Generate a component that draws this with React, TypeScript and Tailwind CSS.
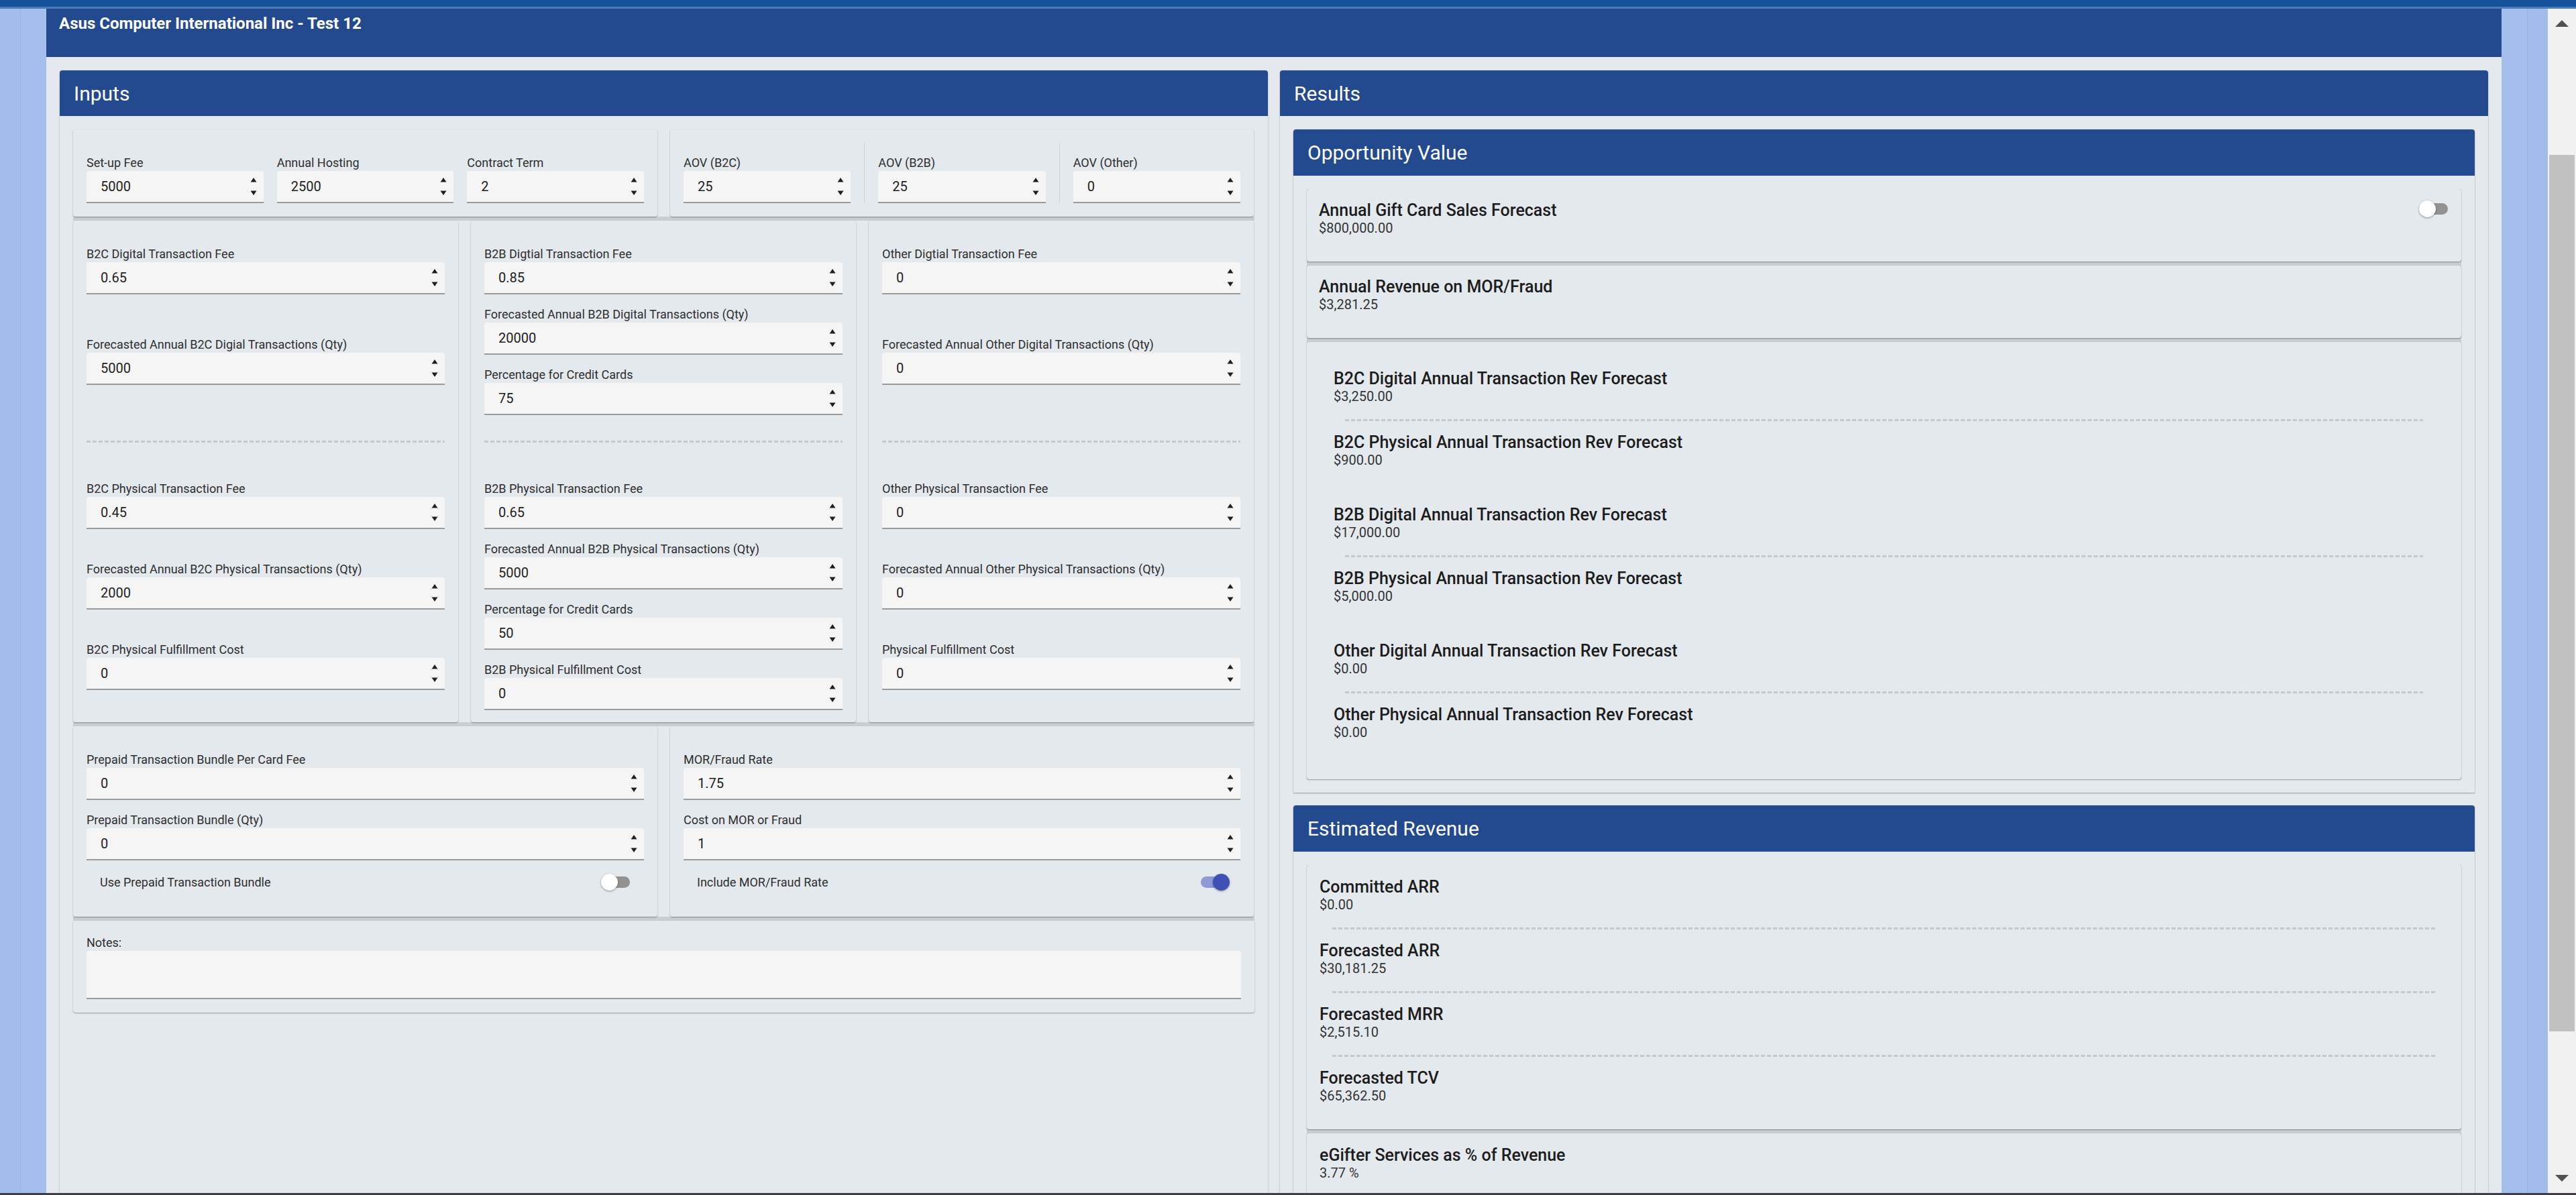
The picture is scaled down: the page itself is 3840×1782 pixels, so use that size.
import React from "react";

/* -------------------------------------------------------------------------- */
/* Small pieces                                                                */
/* -------------------------------------------------------------------------- */

function Spin() {
  return (
    <svg width="10" height="30" viewBox="0 0 10 30" className="shrink-0">
      <polygon points="5,2 9.5,8.5 0.5,8.5" fill="#1f1f1f" />
      <polygon points="0.5,21.5 9.5,21.5 5,28" fill="#1f1f1f" />
    </svg>
  );
}

function NumberField({
  label,
  value,
  className = "",
}: {
  label: string;
  value: string;
  className?: string;
}) {
  return (
    <div className={`flex flex-col ${className}`}>
      <div className="h-[24px] text-[18px] leading-[24px] text-[#2e2e2e] whitespace-nowrap">
        {label}
      </div>
      <div className="h-[48px] flex items-center bg-[#f5f5f5] rounded-t-[4px] border-b-2 border-[#9a9a9a] pl-[21px] pr-[10px]">
        <span className="flex-1 text-[20px] text-[#212121]">{value}</span>
        <Spin />
      </div>
    </div>
  );
}

function Toggle({ on = false }: { on?: boolean }) {
  return (
    <div className="relative w-[43px] h-[25px] shrink-0">
      {on ? (
        <>
          <div className="absolute left-0 right-[6px] top-[4px] h-[17px] rounded-full bg-[#8e9ad6]" />
          <div className="absolute right-0 top-0 w-[25px] h-[25px] rounded-full bg-[#3f51b5] shadow-[0_1px_3px_rgba(0,0,0,0.4)]" />
        </>
      ) : (
        <>
          <div className="absolute left-[6px] right-0 top-[4px] h-[17px] rounded-full bg-[#929292]" />
          <div className="absolute left-0 top-0 w-[25px] h-[25px] rounded-full bg-white shadow-[0_1px_3px_rgba(0,0,0,0.4)]" />
        </>
      )}
    </div>
  );
}

function Dashed({ className = "" }: { className?: string }) {
  return (
    <div
      className={`h-[3px] bg-[repeating-linear-gradient(90deg,#c4c9ce_0px,#c4c9ce_6px,transparent_6px,transparent_9px)] ${className}`}
    />
  );
}

function Card({
  className = "",
  children,
}: {
  className?: string;
  children: React.ReactNode;
}) {
  return (
    <div
      className={`rounded-[4px] bg-[#e4e9ee] shadow-[0_1px_2px_rgba(0,0,0,0.35)] ${className}`}
    >
      {children}
    </div>
  );
}

function ResultItem({ title, value }: { title: string; value: string }) {
  return (
    <div>
      <div className="h-[30px] leading-[30px] text-[25px] font-medium text-[#1c1c1c] whitespace-nowrap">
        {title}
      </div>
      <div className="h-[22px] leading-[22px] text-[20px] text-[#333]">
        {value}
      </div>
    </div>
  );
}

function ItemDivider({ className = "" }: { className?: string }) {
  return <Dashed className={`mt-[23px] mb-[17px] ${className}`} />;
}

/* -------------------------------------------------------------------------- */
/* Data                                                                        */
/* -------------------------------------------------------------------------- */

const channels: {
  digital: [string, string][];
  physical: [string, string][];
}[] = [
  {
    digital: [
      ["B2C Digital Transaction Fee", "0.65"],
      ["Forecasted Annual B2C Digial Transactions (Qty)", "5000"],
    ],
    physical: [
      ["B2C Physical Transaction Fee", "0.45"],
      ["Forecasted Annual B2C Physical Transactions (Qty)", "2000"],
      ["B2C Physical Fulfillment Cost", "0"],
    ],
  },
  {
    digital: [
      ["B2B Digtial Transaction Fee", "0.85"],
      ["Forecasted Annual B2B Digital Transactions (Qty)", "20000"],
      ["Percentage for Credit Cards", "75"],
    ],
    physical: [
      ["B2B Physical Transaction Fee", "0.65"],
      ["Forecasted Annual B2B Physical Transactions (Qty)", "5000"],
      ["Percentage for Credit Cards", "50"],
      ["B2B Physical Fulfillment Cost", "0"],
    ],
  },
  {
    digital: [
      ["Other Digtial Transaction Fee", "0"],
      ["Forecasted Annual Other Digital Transactions (Qty)", "0"],
    ],
    physical: [
      ["Other Physical Transaction Fee", "0"],
      ["Forecasted Annual Other Physical Transactions (Qty)", "0"],
      ["Physical Fulfillment Cost", "0"],
    ],
  },
];

const breakdown: [string, string][][] = [
  [
    ["B2C Digital Annual Transaction Rev Forecast", "$3,250.00"],
    ["B2C Physical Annual Transaction Rev Forecast", "$900.00"],
  ],
  [
    ["B2B Digital Annual Transaction Rev Forecast", "$17,000.00"],
    ["B2B Physical Annual Transaction Rev Forecast", "$5,000.00"],
  ],
  [
    ["Other Digital Annual Transaction Rev Forecast", "$0.00"],
    ["Other Physical Annual Transaction Rev Forecast", "$0.00"],
  ],
];

const revenue: [string, string][] = [
  ["Committed ARR", "$0.00"],
  ["Forecasted ARR", "$30,181.25"],
  ["Forecasted MRR", "$2,515.10"],
  ["Forecasted TCV", "$65,362.50"],
];

/* -------------------------------------------------------------------------- */
/* Panels                                                                      */
/* -------------------------------------------------------------------------- */

function PanelHeader({ title }: { title: string }) {
  return (
    <div className="h-[68px] shrink-0 flex items-center px-[21px] bg-[#234a8f] rounded-t-[4px] text-[30px] text-white">
      {title}
    </div>
  );
}

function InputsPanel() {
  return (
    <div className="w-[1801px] flex flex-col bg-[#e4e9ee] rounded-t-[4px] shadow-[0_0_0_1px_rgba(0,0,0,0.05),0_1px_3px_rgba(0,0,0,0.12)]">
      <PanelHeader title="Inputs" />

      <div className="p-[20px]">
        <div className="flex flex-col gap-[6px] bg-[#c9ced3]">
          {/* ---- fees / AOV ---- */}
          <div className="flex gap-[19px] bg-[#e4e9ee]">
            <Card className="w-[871px] p-[20px]">
              <div className="grid grid-cols-3 gap-[20px]">
                <NumberField className="pt-[18px]" label="Set-up Fee" value="5000" />
                <NumberField className="pt-[18px]" label="Annual Hosting" value="2500" />
                <NumberField className="pt-[18px]" label="Contract Term" value="2" />
              </div>
            </Card>
            <Card className="w-[870px] p-[20px]">
              <div className="flex">
                <NumberField className="flex-1 pt-[18px]" label="AOV (B2C)" value="25" />
                <NumberField
                  className="flex-1 pt-[18px] ml-[20px] pl-[20px] border-l border-[#cdd2d7]"
                  label="AOV (B2B)"
                  value="25"
                />
                <NumberField
                  className="flex-1 pt-[18px] ml-[20px] pl-[20px] border-l border-[#cdd2d7]"
                  label="AOV (Other)"
                  value="0"
                />
              </div>
            </Card>
          </div>

          {/* ---- channel columns ---- */}
          <div className="flex gap-[19px] bg-[#e4e9ee]">
            {channels.map((c, i) => (
              <Card key={i} className="w-[574px] pt-[38px] px-[20px]">
                <div className="h-[270px] flex flex-col">
                  {c.digital.map(([l, v]) => (
                    <NumberField key={l} className="flex-1" label={l} value={v} />
                  ))}
                </div>
                <Dashed className="mt-[20px] mb-[57px]" />
                <div className="h-[360px] flex flex-col">
                  {c.physical.map(([l, v]) => (
                    <NumberField key={l} className="flex-1" label={l} value={v} />
                  ))}
                </div>
              </Card>
            ))}
          </div>

          {/* ---- prepaid / MOR ---- */}
          <div className="flex gap-[19px] bg-[#e4e9ee]">
            <Card className="w-[871px] pt-[38px] px-[20px] pb-[38px]">
              <div className="flex flex-col gap-[18px]">
                <NumberField label="Prepaid Transaction Bundle Per Card Fee" value="0" />
                <NumberField label="Prepaid Transaction Bundle (Qty)" value="0" />
                <div className="h-[28px] flex items-center justify-between pl-[20px] pr-[21px]">
                  <span className="text-[18px] text-[#2e2e2e]">Use Prepaid Transaction Bundle</span>
                  <Toggle />
                </div>
              </div>
            </Card>
            <Card className="w-[870px] pt-[38px] px-[20px] pb-[38px]">
              <div className="flex flex-col gap-[18px]">
                <NumberField label="MOR/Fraud Rate" value="1.75" />
                <NumberField label="Cost on MOR or Fraud" value="1" />
                <div className="h-[28px] flex items-center justify-between pl-[20px] pr-[16px]">
                  <span className="text-[18px] text-[#2e2e2e]">Include MOR/Fraud Rate</span>
                  <Toggle on />
                </div>
              </div>
            </Card>
          </div>

          {/* ---- notes ---- */}
          <div className="bg-[#e4e9ee]">
            <Card className="pt-[21px] px-[20px] pb-[20px]">
              <div className="h-[24px] text-[18px] leading-[24px] text-[#2e2e2e]">Notes:</div>
              <div className="h-[72px] bg-[#f5f5f5] rounded-t-[4px] border-b-2 border-[#9a9a9a]" />
            </Card>
          </div>
        </div>
      </div>
    </div>
  );
}

function SubPanel({
  title,
  children,
}: {
  title: string;
  children: React.ReactNode;
}) {
  return (
    <div className="rounded-t-[4px] bg-[#e4e9ee] shadow-[0_0_0_1px_rgba(0,0,0,0.04),0_1px_2px_rgba(0,0,0,0.3)]">
      <div className="h-[69px] flex items-center px-[21px] bg-[#234a8f] rounded-t-[4px] text-[30px] text-white">
        {title}
      </div>
      <div className="p-[20px]">{children}</div>
    </div>
  );
}

function ResultsPanel() {
  return (
    <div className="w-[1801px] flex flex-col bg-[#e4e9ee] rounded-t-[4px] shadow-[0_0_0_1px_rgba(0,0,0,0.05),0_1px_3px_rgba(0,0,0,0.12)]">
      <PanelHeader title="Results" />

      <div className="p-[20px] flex flex-col gap-[19px]">
        <SubPanel title="Opportunity Value">
          <div className="flex flex-col gap-[6px] bg-[#c9ced3]">
            <Card className="flex items-start justify-between pt-[17px] pb-[39px] pl-[18px] pr-[20px]">
              <ResultItem title="Annual Gift Card Sales Forecast" value="$800,000.00" />
              <Toggle />
            </Card>
            <Card className="pt-[17px] pb-[39px] px-[18px]">
              <ResultItem title="Annual Revenue on MOR/Fraud" value="$3,281.25" />
            </Card>
            <Card className="pt-[40px] pb-[59px] px-[40px] flex flex-col gap-[56px]">
              {breakdown.map((pair, i) => (
                <div key={i}>
                  <ResultItem title={pair[0][0]} value={pair[0][1]} />
                  <ItemDivider className="mx-[17px]" />
                  <ResultItem title={pair[1][0]} value={pair[1][1]} />
                </div>
              ))}
            </Card>
          </div>
        </SubPanel>

        <SubPanel title="Estimated Revenue">
          <div className="flex flex-col gap-[6px] bg-[#c9ced3]">
            <Card className="pt-[18px] pb-[39px] px-[19px]">
              {revenue.map(([t, v], i) => (
                <div key={t}>
                  {i > 0 && <ItemDivider className="mx-[19px]" />}
                  <ResultItem title={t} value={v} />
                </div>
              ))}
            </Card>
            <Card className="pt-[18px] pb-[39px] px-[19px]">
              <ResultItem title="eGifter Services as % of Revenue" value="3.77 %" />
            </Card>
          </div>
        </SubPanel>
      </div>
    </div>
  );
}

/* -------------------------------------------------------------------------- */
/* Page                                                                        */
/* -------------------------------------------------------------------------- */

export default function App() {
  return (
    <div className="w-[3840px] h-[1782px] overflow-hidden flex flex-col bg-[#a4bfeb] font-['Roboto','Liberation_Sans',sans-serif]">
      {/* top window strip */}
      <div className="h-[10px] shrink-0 bg-[#15529b]" />
      <div className="h-[3px] shrink-0 bg-[#4a7cb9]" />

      <div className="flex-1 min-h-0 flex">
        {/* left gutter */}
        <div className="w-[69px] shrink-0 flex">
          <div className="w-[30px] bg-[#a2bde9]" />
          <div className="w-[1px] bg-[#97b2de]" />
          <div className="flex-1 bg-[#a4bfeb]" />
        </div>

        {/* content */}
        <div className="w-[3660px] shrink-0 flex flex-col bg-[#e4e9ee]">
          <div className="h-[72px] shrink-0 bg-[#234a8f] px-[19px] pt-[8px]">
            <div className="text-[24px] leading-[28px] font-bold text-white">
              Asus Computer International Inc - Test 12
            </div>
          </div>

          <div className="flex-1 min-h-0 overflow-hidden flex gap-[18px] px-[20px] pt-[20px]">
            <InputsPanel />
            <ResultsPanel />
          </div>
        </div>

        {/* right gutter */}
        <div className="w-[69px] shrink-0 flex">
          <div className="w-[38px] bg-[#a4bfeb]" />
          <div className="w-[1px] bg-[#97b2de]" />
          <div className="flex-1 bg-[#a1bce8]" />
        </div>

        {/* scrollbar */}
        <div className="w-[42px] shrink-0 bg-[#f1f1f1] flex flex-col items-center">
          <svg width="20" height="10" viewBox="0 0 20 10" className="mt-[17px]">
            <polygon points="10,0 20,10 0,10" fill="#505050" />
          </svg>
          <div className="mt-[191px] w-[38px] h-[1307px] bg-[#c1c1c1]" />
          <div className="flex-1" />
          <svg width="20" height="10" viewBox="0 0 20 10" className="mb-[17px]">
            <polygon points="0,0 20,0 10,10" fill="#505050" />
          </svg>
        </div>
      </div>

      <div className="h-[3px] shrink-0 bg-[#413d48]" />
    </div>
  );
}
